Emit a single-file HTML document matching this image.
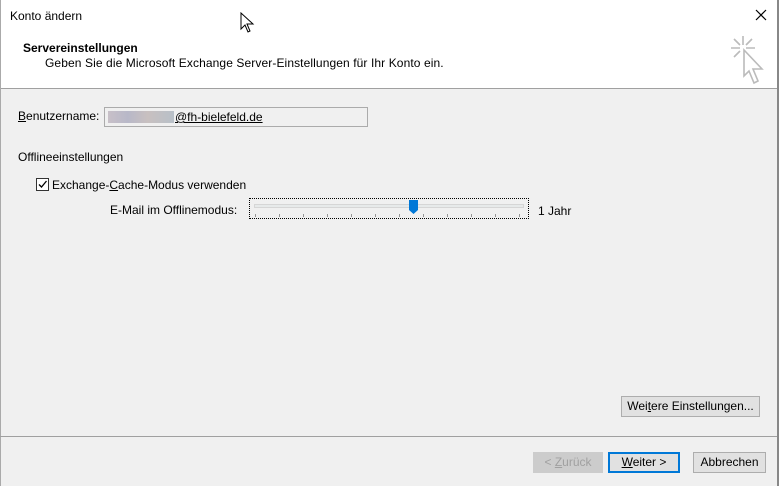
<!DOCTYPE html>
<html><head><style>
*{margin:0;padding:0;box-sizing:border-box}
body{width:779px;height:486px;background:#f0f0f0;font-family:"Liberation Sans",sans-serif;font-size:12px;color:#000;position:relative;overflow:hidden}
.a{position:absolute;white-space:nowrap}
.btn{position:absolute;height:21px;border:1px solid #adadad;background:#e1e1e1;text-align:center;line-height:19px;font-size:12px}
</style></head><body>
<div class="a" style="left:0;top:0;width:779px;height:89px;background:#fff;border-bottom:1px solid #a0a0a0"></div>
<div class="a" style="left:777px;top:0;width:2px;height:486px;background:#888"></div>
<div class="a" style="left:0;top:0;width:1px;height:486px;background:#aaa"></div>
<div class="a" style="left:10px;top:9px;font-size:12px">Konto ändern</div>
<svg class="a" style="left:240px;top:12px" width="16" height="22" viewBox="0 0 16 22"><path d="M1 1 L1 17 L5 13 L8 20 L10 19 L7 12 L13 12 Z" fill="#fff" stroke="#000" stroke-width="1"/></svg>
<svg class="a" style="left:755px;top:9px" width="12" height="12"><path d="M1 1L11 11M11 1L1 11" stroke="#000" stroke-width="1.2"/></svg>
<div class="a" style="left:23px;top:41px;font-weight:bold;font-size:12px">Servereinstellungen</div>
<div class="a" style="left:45px;top:56px;font-size:12px;letter-spacing:0.1px">Geben Sie die Microsoft Exchange Server-Einstellungen für Ihr Konto ein.</div>
<svg class="a" style="left:728px;top:36px" width="40" height="52" viewBox="0 0 40 52"><g stroke="#bbb" stroke-width="1.6" fill="none"><path d="M15 0v9M3 12h9M18 12h9M6 3l6 6M24 3l-6 6M6 21l6-6"/><path d="M16 14 L16 40 L21 35 L26 47 L30 45 L25 33 L34 33 Z" fill="#fff"/></g></svg>
<div class="a" style="left:18px;top:109px"><u>B</u>enutzername:</div>
<div class="a" style="left:104px;top:107px;width:264px;height:20px;border:1px solid #ababab;background:#f0f0f0"></div>
<div class="a" style="left:108px;top:111px;width:66px;height:12px;background:linear-gradient(90deg,#c8c0c8,#b8b8c8 30%,#c8c0c0 60%,#b8c0c8)"></div>
<div class="a" style="left:175px;top:110px;text-decoration:underline">@fh-bielefeld.de</div>
<div class="a" style="left:18px;top:150px">Offlineeinstellungen</div>
<div class="a" style="left:36px;top:178px;width:13px;height:13px;border:1px solid #333;background:#fff"></div>
<svg class="a" style="left:37px;top:179px" width="11" height="11"><path d="M2 5.5L4.5 8L9.5 2" stroke="#000" stroke-width="1.3" fill="none"/></svg>
<div class="a" style="left:52px;top:178px">Exchange-<u>C</u>ache-Modus verwenden</div>
<div class="a" style="left:110px;top:203px">E-Mail im Offlinemodus:</div>
<div class="a" style="left:249px;top:198px;width:280px;height:21px;border:1px dotted #000"></div>
<div class="a" style="left:254px;top:204px;width:270px;height:4px;background:#e7eaea;border:1px solid #d6d6d6"></div>
<svg class="a" style="left:409px;top:200px" width="10" height="15"><path d="M0 0H9V10L4.5 14L0 10Z" fill="#0078d7"/></svg>
<svg class="a" style="left:250px;top:214px" width="278" height="4"><g stroke="#999" stroke-width="1"><path d="M5.5 0v3M29.5 0v3M53.5 0v3M77.5 0v3M101.5 0v3M125.5 0v3M149.5 0v3M173.5 0v3M197.5 0v3M221.5 0v3M245.5 0v3M269.5 0v3"/></g></svg>
<div class="a" style="left:538px;top:204px">1 Jahr</div>
<div class="btn" style="left:621px;top:396px;width:139px">Wei<u>t</u>ere Einstellungen...</div>
<div class="a" style="left:0;top:436px;width:777px;height:1px;background:#a0a0a0"></div>
<div class="btn" style="left:533px;top:452px;width:70px;color:#a0a0a0;border-color:#ccc;background:#ccc">&lt; <u>Z</u>urück</div>
<div class="btn" style="left:608px;top:452px;width:72px;border:2px solid #0078d7;line-height:17px"><u>W</u>eiter &gt;</div>
<div class="btn" style="left:693px;top:452px;width:73px">Abbrechen</div>
</body></html>
